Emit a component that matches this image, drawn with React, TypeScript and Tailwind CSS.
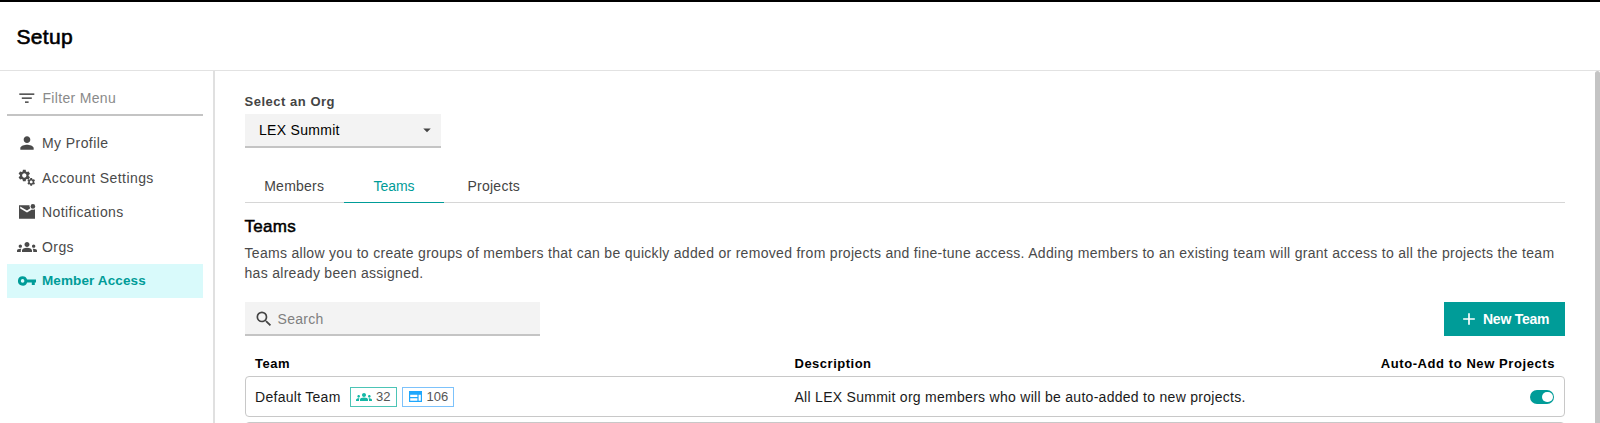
import type { ReactNode } from 'react';
import {
  MdAdd,
  MdArrowDropDown,
  MdGroups,
  MdPerson,
  MdSearch,
} from 'react-icons/md';

const GEAR =
  'M19.14 12.94c.04-.3.06-.61.06-.94 0-.32-.02-.64-.07-.94l2.03-1.58c.18-.14.23-.41.12-.61l-1.92-3.32c-.12-.22-.37-.29-.59-.22l-2.39.96c-.5-.38-1.03-.7-1.62-.94l-.36-2.54c-.04-.24-.24-.41-.48-.41h-3.84c-.24 0-.43.17-.47.41l-.36 2.54c-.59.24-1.13.57-1.62.94l-2.39-.96c-.22-.08-.47 0-.59.22L2.74 8.87c-.12.21-.08.47.12.61l2.03 1.58c-.05.3-.09.63-.09.94s.02.64.07.94l-2.03 1.58c-.18.14-.23.41-.12.61l1.92 3.32c.12.22.37.29.59.22l2.39-.96c.5.38 1.03.7 1.62.94l.36 2.54c.05.24.24.41.48.41h3.84c.24 0 .44-.17.47-.41l.36-2.54c.59-.24 1.13-.56 1.62-.94l2.39.96c.22.08.47 0 .59-.22l1.92-3.32c.12-.22.07-.47-.12-.61l-2.01-1.58zM12 15.6c-1.98 0-3.6-1.62-3.6-3.6s1.62-3.6 3.6-3.6 3.6 1.62 3.6 3.6-1.62 3.6-3.6 3.6z';

function FilterIcon() {
  return (
    <svg width="20" height="20" viewBox="0 0 20 20" fill="currentColor">
      <path d="M2.3 5.6h15v1.2h-15zM4.8 9.6h10v1.2h-10zM8 13.5h3.6v1.3H8z" />
    </svg>
  );
}

function GearsIcon() {
  return (
    <svg width="18" height="18" viewBox="0 0 18 18" fill="currentColor">
      <path d={GEAR} transform="translate(-0.9 -0.7) scale(0.6)" />
      <path d={GEAR} transform="translate(8.4 8.1) scale(0.4)" />
    </svg>
  );
}

function MailUnreadIcon() {
  return (
    <svg width="18" height="16" viewBox="0 0 18 16" fill="currentColor">
      <path d="M1 1.3H11.5a3.5 3.5 0 0 0 .8 2.9L9 6.4 2.2 2.6v1.9L9 8.4l5-3c1 .5 2.1.4 3-.1v9.4H1z" />
      <circle cx="14.9" cy="2.4" r="2.3" />
    </svg>
  );
}

function KeyIcon() {
  return (
    <svg width="18" height="12" viewBox="0 0 18 12" fill="currentColor">
      <path
        fillRule="evenodd"
        d="M4.6 1.2a4.7 4.7 0 0 1 4.5 3.4H18v2.8h-1.2v2.5h-3V7.4H9.1A4.7 4.7 0 1 1 4.6 1.2zM4.6 4.1a1.8 1.8 0 1 0 0 3.6 1.8 1.8 0 0 0 0-3.6z"
      />
    </svg>
  );
}

function WebIcon() {
  return (
    <svg width="13" height="11" viewBox="0 0 13 11" fill="currentColor">
      <path
        fillRule="evenodd"
        d="M0 0h13v11H0zM1.2 3.7v2.4h7.2V3.7zM1.2 7.2v2.6h7.2V7.2zM9.6 3.7v6.1h2.2V3.7z"
      />
    </svg>
  );
}

interface MenuItemProps {
  icon: ReactNode;
  label: string;
  active?: boolean;
}

function MenuItem({ icon, label, active }: MenuItemProps) {
  return (
    <a
      className={
        active
          ? 'flex h-[34.5px] items-center bg-[#d9fafb] pl-2.5 text-[13.5px] font-bold tracking-[0.12px] text-[#009c98]'
          : 'flex h-[34.5px] items-center pl-2.5 text-sm tracking-[0.42px] text-[#4a4a4a]'
      }
    >
      <span className="flex w-5 shrink-0 justify-center">{icon}</span>
      <span className="ml-[5px]">{label}</span>
    </a>
  );
}

function Sidebar() {
  return (
    <aside className="w-[215px] shrink-0 border-r-2 border-[#e0e0e0] pl-[7px] pr-[10px]">
      <div className="mt-[10.5px] flex h-[34px] items-center border-b-2 border-[#c4c4c4] pl-2.5 text-[#222]">
        <FilterIcon />
        <span className="ml-[5.5px] text-sm tracking-[0.32px] text-[#8a8a8a]">Filter Menu</span>
      </div>
      <nav className="mt-[10.3px]">
        <MenuItem icon={<MdPerson size={20} />} label="My Profile" />
        <MenuItem icon={<GearsIcon />} label="Account Settings" />
        <MenuItem icon={<MailUnreadIcon />} label="Notifications" />
        <MenuItem icon={<MdGroups size={20} />} label="Orgs" />
        <MenuItem icon={<KeyIcon />} label="Member Access" active />
      </nav>
    </aside>
  );
}

function TeamsPanel() {
  return (
    <main className="min-w-0 flex-1 pl-[29.5px] pr-[29.5px]">
      <div className="mt-[21.5px] h-[18px] text-[13px] leading-[18px] font-bold tracking-[0.52px] text-[#444]">
        Select an Org
      </div>
      <div className="mt-[3.5px] flex h-[34px] w-[196.5px] items-center border-b-2 border-[#c4c4c4] bg-[#f3f3f3] pl-[14.5px] pr-[5px]">
        <span className="flex-1 text-sm tracking-[0.3px] text-black">LEX Summit</span>
        <MdArrowDropDown size={18} className="text-[#444]" />
      </div>

      <div className="mt-[20px] flex h-[35px] border-b border-[#d6d6d6] text-sm tracking-[0.25px] text-[#444]">
        <div className="flex w-[99.5px] items-center justify-center pt-px">Members</div>
        <div className="-mb-px flex w-[100px] items-center justify-center border-b border-[#009c98] pt-px tracking-normal text-[#009c98]">
          Teams
        </div>
        <div className="flex w-[99.5px] items-center justify-center pt-px">Projects</div>
      </div>

      <h2 className="mt-[12px] text-[17px] leading-6 tracking-[0.3px] text-black [-webkit-text-stroke:0.5px_black]">
        Teams
      </h2>
      <p className="mt-[5px] text-sm leading-[19.7px] tracking-[0.3px] text-[#4a4a4a]">
        Teams allow you to create groups of members that can be quickly added or removed from
        projects and fine-tune access. Adding members to an existing team will grant access to all
        the projects the team has already been assigned.
      </p>

      <div className="mt-[18.5px] flex items-center justify-between">
        <div className="flex h-[34.5px] w-[295.5px] items-center border-b-2 border-[#c4c4c4] bg-[#f3f3f3] pt-px pl-[9px]">
          <MdSearch size={20} className="text-[#444]" />
          <span className="ml-1 text-sm tracking-[0.3px] text-[#808080]">Search</span>
        </div>
        <button className="flex h-[34.5px] w-[121px] items-center bg-[#009c98] pl-[15px] text-sm font-bold tracking-[-0.25px] text-white">
          <MdAdd size={20} />
          <span className="ml-[4px]">New Team</span>
        </button>
      </div>

      <div className="mt-[18px] flex h-[18px] items-center pl-[10.5px] pr-[10px] text-[13px] font-bold tracking-[0.5px] text-black">
        <span className="w-[539.5px]">Team</span>
        <span className="flex-1">Description</span>
        <span className="tracking-[0.58px]">Auto-Add to New Projects</span>
      </div>
      <div className="mt-[3.5px] flex h-[41px] items-center rounded border border-[#c8c8c8] pt-px pl-[9.5px] pr-[10px] text-sm tracking-[0.28px] text-[#1a1a1a]">
        <div className="flex w-[539.5px] items-center">
          <span>Default Team</span>
          <span className="ml-[9.5px] flex h-5 w-[47px] items-center border border-[#4cc4b6] pl-[5px] text-[13px] tracking-normal text-[#555]">
            <MdGroups size={16} className="text-[#14b8a6]" />
            <span className="ml-1">32</span>
          </span>
          <span className="ml-[4.5px] flex h-5 w-[52px] items-center border border-[#7cc2fb] pl-[6px] text-[13px] tracking-normal text-[#555]">
            <span className="text-[#1ea7fd]">
              <WebIcon />
            </span>
            <span className="ml-[5px]">106</span>
          </span>
        </div>
        <span className="flex-1">
          All LEX Summit org members who will be auto-added to new projects.
        </span>
        <span className="flex h-[13.5px] w-[24px] items-center justify-end rounded-full bg-[#009c98] pr-[1.5px]">
          <span className="size-[10.5px] rounded-full bg-white" />
        </span>
      </div>
      <div className="mt-[5px] h-[41px] rounded border border-[#c8c8c8]" />
    </main>
  );
}

export default function App() {
  return (
    <div className="flex h-[423px] flex-col overflow-hidden bg-white font-['Liberation_Sans',Arial,sans-serif]">
      <header className="flex h-[71px] shrink-0 items-center border-t-2 border-b border-t-black border-b-[#e2e2e2] pt-0.5 pl-[16.5px]">
        <h1 className="text-[21px] tracking-[0.3px] text-black [-webkit-text-stroke:0.6px_black]">
          Setup
        </h1>
      </header>
      <div className="flex min-h-0 flex-1">
        <Sidebar />
        <TeamsPanel />
        <div className="w-[5.5px] shrink-0 rounded-t-full bg-[#c4c4c4]" />
      </div>
    </div>
  );
}
